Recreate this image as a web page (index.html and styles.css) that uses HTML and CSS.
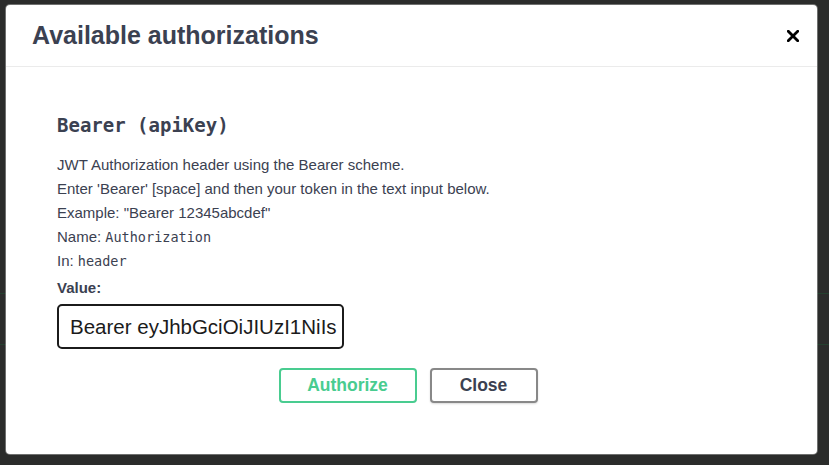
FILE: index.html
```html
<!DOCTYPE html>
<html lang="en">
<head>
<meta charset="utf-8">
<title>Available authorizations</title>
<link rel="stylesheet" href="styles.css">
</head>
<body>
<div class="backdrop">
  <div class="bg-line bg-line-1"></div>
  <div class="bg-line bg-line-2"></div>
  <div class="modal">
    <div class="modal-header">
      <h3 class="modal-title">Available authorizations</h3>
      <button class="close-x" aria-label="Close">
        <svg width="12" height="12" viewBox="0 0 12 12"><path d="M1.3 1.3L10.7 10.7M10.7 1.3L1.3 10.7" stroke="#000" stroke-width="2.8" stroke-linecap="square"/></svg>
      </button>
    </div>
    <div class="modal-body">
      <h4 class="scheme-title">Bearer (apiKey)</h4>
      <div class="desc">
        <p>JWT Authorization header using the Bearer scheme.</p>
        <p>Enter 'Bearer' [space] and then your token in the text input below.</p>
        <p>Example: "Bearer 12345abcdef"</p>
        <p>Name: <code>Authorization</code></p>
        <p>In: <code>header</code></p>
      </div>
      <label class="value-label">Value:</label>
      <div class="input-box"><span class="input-text">Bearer eyJhbGciOiJIUzI1NiIs</span></div>
      <div class="btn-row">
        <button class="btn btn-authorize">Authorize</button>
        <button class="btn btn-close">Close</button>
      </div>
    </div>
  </div>
</div>
</body>
</html>
```
FILE: styles.css
```css
* { box-sizing: border-box; }
html, body { margin: 0; padding: 0; }
body {
  background: #2b2c2b;
  font-family: "Liberation Sans", Arial, sans-serif;
  color: #3b4151;
  width: 829px;
  height: 465px;
  overflow: hidden;
}
.backdrop {
  position: relative;
  padding: 5px 12px 11px 6px;
  height: 465px;
}
.bg-line {
  position: absolute;
  left: 0;
  right: 0;
  height: 1px;
  background: #24402f;
}
.bg-line-1 { top: 293px; }
.bg-line-2 { top: 344px; }
.modal {
  position: relative;
  background: #fff;
  border-radius: 4px;
  height: 449px;
  box-shadow: 0 0 0 1px rgba(180,180,180,0.5);
}
.modal-header {
  height: 62px;
  border-bottom: 1px solid #ebebeb;
  display: flex;
  align-items: center;
  justify-content: space-between;
  padding: 0 18px 0 26px;
}
.modal-title {
  margin: 0;
  font-size: 25px;
  font-weight: 700;
  color: #3b4151;
}
.close-x {
  border: 0;
  background: none;
  padding: 0;
  width: 12px;
  height: 12px;
  display: flex;
  margin-top: 1px;
}
.modal-body {
  padding: 0 51px;
}
.scheme-title {
  margin: 46px 0 0;
  font-family: "DejaVu Sans Mono", monospace;
  font-size: 19px;
  font-weight: 700;
  line-height: 24px;
  color: #3b4151;
}
.desc {
  margin-top: 16px;
  font-size: 15px;
  line-height: 24px;
  color: #3b4151;
}
.desc p { margin: 0; height: 24px; }
.desc code {
  font-family: "DejaVu Sans Mono", monospace;
  font-size: 13.5px;
  line-height: 1;
}
.value-label {
  display: block;
  margin-top: 3px;
  font-size: 15px;
  font-weight: 700;
  line-height: 24px;
}
.input-box {
  margin-top: 4px;
  width: 287px;
  height: 45px;
  border: 2px solid #1b1b1b;
  border-radius: 5px;
  padding: 0 0 0 11px;
  display: flex;
  align-items: center;
  overflow: hidden;
  white-space: nowrap;
}
.input-text {
  font-size: 20.5px;
  color: #1b1b1b;
}
.btn-row {
  display: flex;
  justify-content: center;
  gap: 13px;
  margin-top: 19px;
  padding-right: 7px;
}
.btn {
  height: 35px;
  border-radius: 4px;
  background: #fff;
  font-family: "Liberation Sans", Arial, sans-serif;
  font-size: 17.5px;
  font-weight: 700;
  padding: 0;
}
.btn-authorize {
  width: 138px;
  border: 2px solid #49cc90;
  color: #49cc90;
}
.btn-close {
  width: 108px;
  border: 2px solid #888;
  color: #3b4151;
  box-shadow: 0 1px 2px rgba(0,0,0,0.15);
}
```
